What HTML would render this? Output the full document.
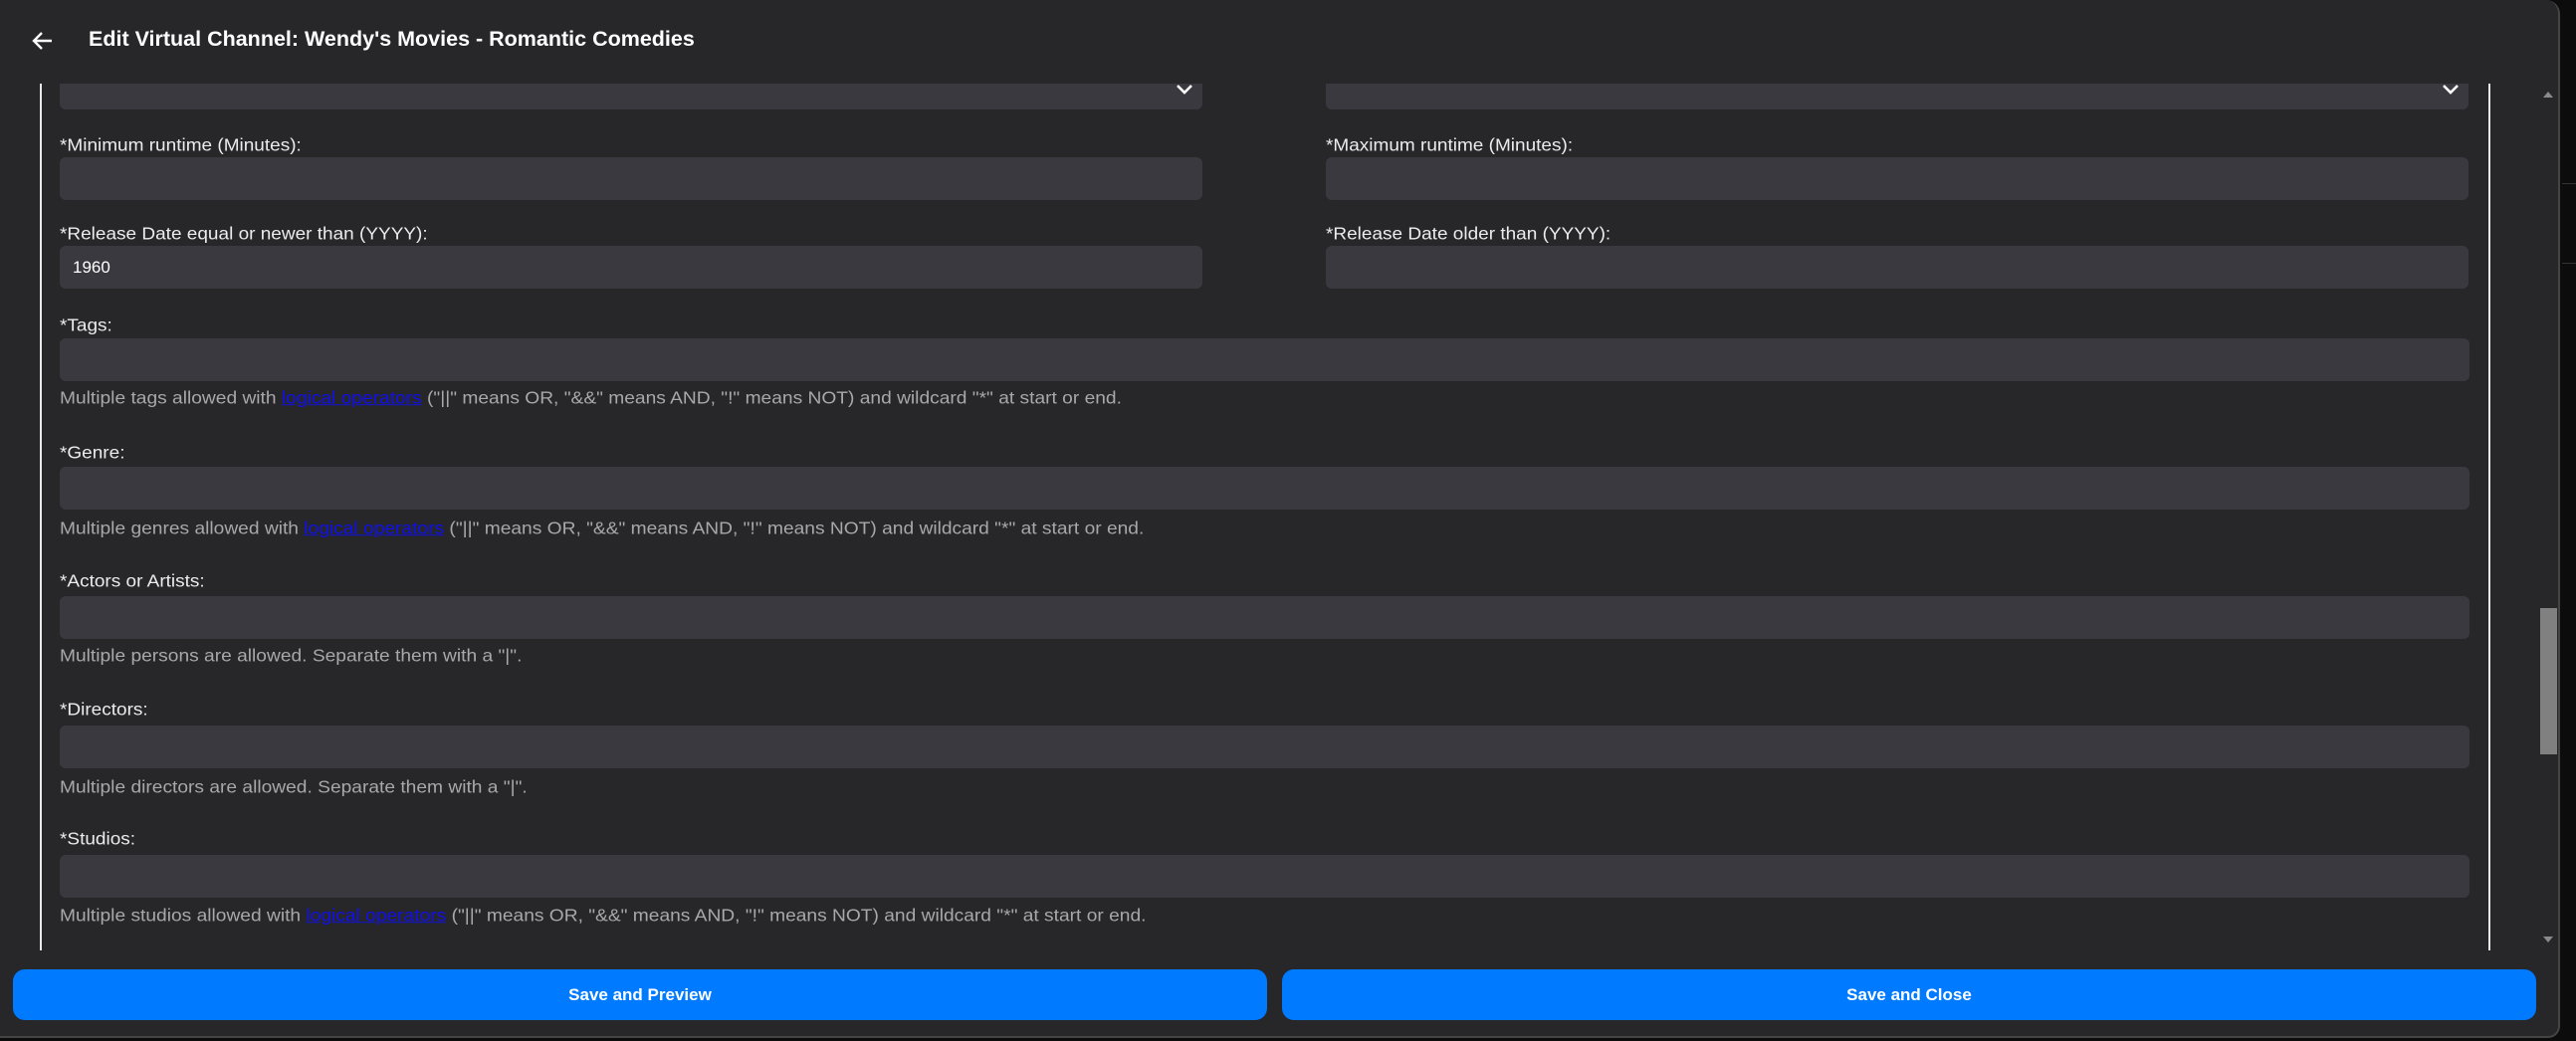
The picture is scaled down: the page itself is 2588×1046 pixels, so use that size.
<!DOCTYPE html>
<html><head><meta charset="utf-8"><style>
*{box-sizing:border-box;margin:0;padding:0}
html,body{width:2588px;height:1046px;overflow:hidden;background:#0c0c0c;font-family:"Liberation Sans",sans-serif}
#dlg{position:absolute;left:0;top:0;width:2572px;height:1043px;background:#27272a;border-right:2px solid #444;border-bottom:2px solid #444;border-radius:0 0 12px 0;border-top-right-radius:14px;overflow:hidden}
.title{position:absolute;left:89px;top:27px;color:#fff;font-weight:bold;font-size:21.5px;white-space:nowrap}
.arrow{position:absolute;left:32px;top:30px}
.vl{position:absolute;top:84px;width:1.5px;background:#e8e8e8}
.lab{position:absolute;color:#ececec;font-size:19px;white-space:nowrap;transform:scaleY(0.92);transform-origin:left top}
.inp{position:absolute;background:#3a393f;border-radius:6px;height:43px}
.help{position:absolute;left:60px;color:#a8a8a8;font-size:19.2px;white-space:nowrap;transform:scaleY(0.9);transform-origin:left top}
.help a{color:#1010ee;text-decoration:underline}
.btn{position:absolute;top:974px;height:51px;background:#007aff;border-radius:12px;color:#fff;font-weight:bold;font-size:17px;display:flex;align-items:center;justify-content:center}
.side{position:absolute;left:2574px;width:14px;height:1px;background:#333}
</style></head><body>
<div class="side" style="top:184px"></div><div class="side" style="top:264px"></div>
<div id="dlg">
<svg class="arrow" width="22" height="22" viewBox="0 0 22 22"><path d="M20 11H3M10 3L2 11l8 8" stroke="#fff" stroke-width="2.4" fill="none"/></svg>
<div class="title">Edit Virtual Channel: Wendy's Movies - Romantic Comedies</div>
<div class="vl" style="left:40px;height:871px"></div>
<div class="vl" style="left:2500px;height:871px"></div>
<div style="position:absolute;left:0;top:84px;width:2500px;height:871px;overflow:hidden">
<div class="inp" style="left:60px;top:-16px;width:1148px;height:42px"></div>
<div class="inp" style="left:1332px;top:-16px;width:1148px;height:42px"></div>
<svg style="position:absolute;left:1181px;top:0" width="18" height="12" viewBox="0 0 18 12"><path d="M2 2l7 7 7-7" stroke="#fff" stroke-width="2.6" fill="none"/></svg>
<svg style="position:absolute;left:2453px;top:0" width="18" height="12" viewBox="0 0 18 12"><path d="M2 2l7 7 7-7" stroke="#fff" stroke-width="2.6" fill="none"/></svg>
</div>
<div class="lab" style="left:60px;top:137px">*Minimum runtime (Minutes):</div>
<div class="lab" style="left:1332px;top:137px">*Maximum runtime (Minutes):</div>
<div class="inp" style="left:60px;top:158px;width:1148px"></div>
<div class="inp" style="left:1332px;top:158px;width:1148px"></div>
<div class="lab" style="left:60px;top:226px">*Release Date equal or newer than (YYYY):</div>
<div class="lab" style="left:1332px;top:226px">*Release Date older than (YYYY):</div>
<div class="inp" style="left:60px;top:247px;width:1148px"><span style="position:absolute;left:13px;top:12px;color:#fff;font-size:17px">1960</span></div>
<div class="inp" style="left:1332px;top:247px;width:1148px"></div>

<div class="lab" style="left:60px;top:318px">*Tags:</div>
<div class="inp" style="left:60px;top:340px;width:2421px"></div>
<div class="help" style="top:391px">Multiple tags allowed with <a>logical operators</a> ("||" means OR, "&amp;&amp;" means AND, "!" means NOT) and wildcard "*" at start or end.</div>
<div class="lab" style="left:60px;top:446px">*Genre:</div>
<div class="inp" style="left:60px;top:469px;width:2421px"></div>
<div class="help" style="top:522px">Multiple genres allowed with <a>logical operators</a> ("||" means OR, "&amp;&amp;" means AND, "!" means NOT) and wildcard "*" at start or end.</div>
<div class="lab" style="left:60px;top:575px">*Actors or Artists:</div>
<div class="inp" style="left:60px;top:599px;width:2421px"></div>
<div class="help" style="top:650px">Multiple persons are allowed. Separate them with a "|".</div>
<div class="lab" style="left:60px;top:704px">*Directors:</div>
<div class="inp" style="left:60px;top:729px;width:2421px"></div>
<div class="help" style="top:782px">Multiple directors are allowed. Separate them with a "|".</div>
<div class="lab" style="left:60px;top:834px">*Studios:</div>
<div class="inp" style="left:60px;top:859px;width:2421px"></div>
<div class="help" style="top:911px">Multiple studios allowed with <a>logical operators</a> ("||" means OR, "&amp;&amp;" means AND, "!" means NOT) and wildcard "*" at start or end.</div>

<svg style="position:absolute;left:2555px;top:92px" width="10" height="6"><path d="M0 6L5 0L10 6Z" fill="#8a8a8a"/></svg>
<div style="position:absolute;left:2552px;top:611px;width:17px;height:147px;background:#808080"></div>
<svg style="position:absolute;left:2555px;top:941px" width="10" height="6"><path d="M0 0L5 6L10 0Z" fill="#8a8a8a"/></svg>

<div class="btn" style="left:13px;width:1260px">Save and Preview</div>
<div class="btn" style="left:1288px;width:1260px">Save and Close</div>
</div>
</body></html>
